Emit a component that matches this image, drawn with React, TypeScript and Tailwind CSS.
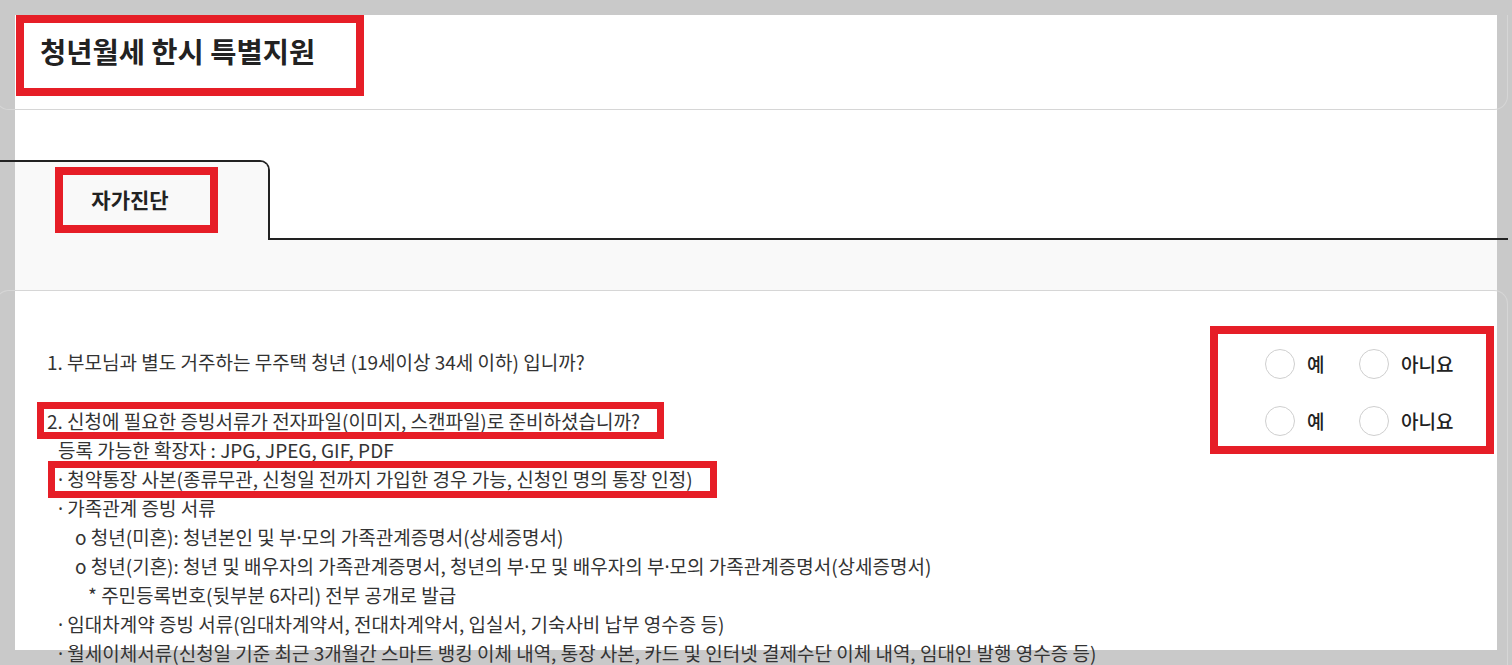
const font = { fontFamily: '"Noto Sans CJK KR", "Noto Sans", sans-serif' };

// narrow middle dot, the CJK one comes out full width
function Dot() {
  return <span style={{ fontFamily: '"Noto Sans", sans-serif' }}>·</span>;
}

function Radio({ label }: { label: string }) {
  return (
    <label className="flex w-[94px] shrink-0 items-center gap-[12px] whitespace-nowrap">
      <span className="h-[30px] w-[30px] shrink-0 rounded-full border border-[#cfcfcf] bg-white" />
      <span className="text-[19px] font-medium text-[#222]">{label}</span>
    </label>
  );
}

function Header() {
  return (
    <div className="-ml-[20px] h-[95px] w-[1513px] rounded-b-[14px] border-x border-b border-[#d6d6d6]">
      <div className="ml-[20px] flex h-[81px] w-[348px] items-center border-8 border-[#e61e27] pb-[9px] pl-[16px]">
        <h1 className="text-[28.5px] font-bold leading-none text-[#222]">청년월세 한시 특별지원</h1>
      </div>
    </div>
  );
}

function Tabs() {
  return (
    <>
      <div className="mt-[50px] flex">
        <div className="-ml-[20px] h-[80px] w-[275px] overflow-hidden rounded-tr-[10px] border-t-2 border-r-2 border-[#222]">
          <div className="ml-[20px] h-full bg-[#f9f9f9] pt-[5px] pl-[40px]">
            <div className="flex h-[66px] w-[163px] items-center justify-center border-8 border-[#e61e27] pr-[13px]">
              <span className="text-[21px] font-bold text-[#222]">자가진단</span>
            </div>
          </div>
        </div>
        <div className="-mr-[11px] flex-1 border-b-2 border-[#222]" />
      </div>
      <div className="h-[50px] bg-[#f9f9f9]" />
    </>
  );
}

function Questions() {
  return (
    <div className="-ml-[20px] flex w-[1513px] justify-between rounded-t-[14px] border-x border-t border-[#d6d6d6] pr-[13px] pl-[51px]">
      <div className="pt-[56px] text-[19px] leading-[29px] whitespace-nowrap text-[#333]">
        <p className="h-[29px]">1. 부모님과 별도 거주하는 무주택 청년 (19세이상 34세 이하) 입니까?</p>
        <p className="mt-[30px] h-[29px]">
          <span className="relative inline-block">
            2. 신청에 필요한 증빙서류가 전자파일(이미지, 스캔파일)로 준비하셨습니까?
            <span className="absolute -top-[4px] -right-[24px] -bottom-[4px] -left-[10px] border-[7px] border-[#e61e27]" />
          </span>
        </p>
        <div className="pl-[11px]">
          <p className="h-[29px]">등록 가능한 확장자 : JPG, JPEG, GIF, PDF</p>
          <p className="h-[29px]">
            <span className="relative inline-block">
              <Dot /> 청약통장 사본(종류무관, 신청일 전까지 가입한 경우 가능, 신청인 명의 통장 인정)
              <span className="absolute -top-[3px] -right-[24px] -bottom-[3px] -left-[10px] border-[7px] border-[#e61e27]" />
            </span>
          </p>
          <p className="h-[29px]">
            <Dot /> 가족관계 증빙 서류
          </p>
          <p className="h-[29px] pl-[17px]">
            o 청년(미혼): 청년본인 및 부<Dot />모의 가족관계증명서(상세증명서)
          </p>
          <p className="h-[29px] pl-[17px]">
            o 청년(기혼): 청년 및 배우자의 가족관계증명서, 청년의 부<Dot />모 및 배우자의 부<Dot />모의 가족관계증명서(상세증명서)
          </p>
          <p className="h-[29px] pl-[30px]">* 주민등록번호(뒷부분 6자리) 전부 공개로 발급</p>
          <p className="h-[29px]">
            <Dot /> 임대차계약 증빙 서류(임대차계약서, 전대차계약서, 입실서, 기숙사비 납부 영수증 등)
          </p>
          <p className="h-[29px]">
            <Dot /> 월세이체서류(신청일 기준 최근 3개월간 스마트 뱅킹 이체 내역, 통장 사본, 카드 및 인터넷 결제수단 이체 내역, 임대인 발행 영수증 등)
          </p>
        </div>
      </div>
      <div className="mt-[35px] flex h-[128px] w-[284px] flex-col gap-[27px] self-start border-8 border-[#e61e27] pt-[15px] pl-[47px]">
        <div className="flex items-center">
          <Radio label="예" />
          <Radio label="아니요" />
        </div>
        <div className="flex items-center">
          <Radio label="예" />
          <Radio label="아니요" />
        </div>
      </div>
    </div>
  );
}

export default function App() {
  return (
    <div className="h-[665px] w-full overflow-hidden bg-[#c9c9c9] pt-[15px]" style={font}>
      <div className="ml-[15px] h-[635px] w-[1482px] bg-white">
        <Header />
        <Tabs />
        <Questions />
      </div>
    </div>
  );
}
